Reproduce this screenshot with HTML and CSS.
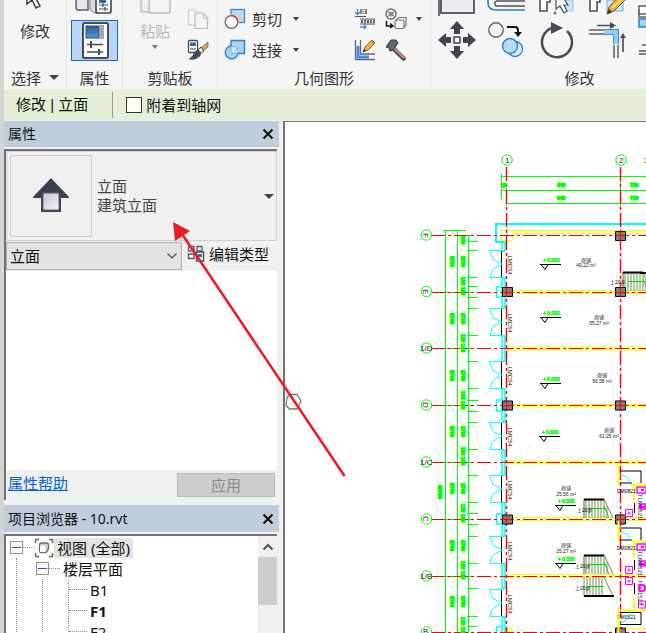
FILE: index.html
```html
<!DOCTYPE html>
<html lang="zh-CN">
<head>
<meta charset="utf-8">
<title>项目浏览器 - 10.rvt</title>
<link rel="stylesheet" href="styles.css">
</head>
<body>
<div class="app">
<header class="ribbon">
  <section class="panel panel-select">
    <div class="panel-body">
      <button class="tool tool-large">
        <svg width="32" height="20" viewBox="0 0 32 20"><path d="M8 -4V4L13 0L17 8L21 6L17 -1H23Z" fill="#fff" stroke="#3b3f45" stroke-width="1.5"/></svg>
        <span>修改</span>
      </button>
    </div>
    <h2 class="panel-title">选择 <i class="caret caret-large"></i></h2>
  </section>
  <section class="panel panel-props">
    <div class="panel-body">
      <button class="tool" aria-label="类型属性">
        <svg width="40" height="16" viewBox="0 0 40 16"><path d="M1 -4V8Q2 11 5 10H13V-4" fill="#e3e7ee" stroke="#5b626b" stroke-width="1.5"/><path d="M15 -2V9Q18 14 24 13V-2" fill="#d8dde4" stroke="#747b84"/><rect x="21" y="-4" width="15" height="17" rx="2" fill="#fff" stroke="#454c55" stroke-width="1.7"/><path d="M24 0H31V3H24Z" fill="#2f6ba6"/><path d="M24 5H33M24 9H33M28 3V7M30 7V11" stroke="#454c55" stroke-width="1.2"/></svg>
      </button>
      <button class="tool tool-active" aria-label="属性">
        <svg width="30" height="38" viewBox="0 0 30 38"><defs><linearGradient id="blue" x2="0" y2="1"><stop stop-color="#2b5c90"/><stop offset="1" stop-color="#5796cb"/></linearGradient></defs><rect x="3" y="1" width="25" height="35" rx="1.5" fill="#fbfbfc" stroke="#454b53" stroke-width="2"/><rect x="6" y="4" width="13" height="12" fill="url(#blue)" stroke="#244d79"/><path d="M20 3H24V17H20Z" fill="#a5a9b3"/><path d="M7 22.500H23M7 30H23" stroke="#454b53" stroke-width="1.500"/><path d="M11 19V26M19 27V33" stroke="#454b53" stroke-width="2"/></svg>
      </button>
    </div>
    <h2 class="panel-title">属性</h2>
  </section>
  <section class="panel panel-clip">
    <div class="panel-body clip-body">
      <button class="tool tool-large" disabled>
        <svg width="34" height="20" viewBox="0 0 34 20"><path d="M3 -3V10Q3 12 5 12H12" fill="#eee" stroke="#c2c2c2" stroke-width="1.600"/><rect x="11" y="-3" width="21" height="16" rx="2" fill="#f3f3f3" stroke="#bdbdbd" stroke-width="1.500"/></svg>
        <span>粘贴</span><i class="caret"></i>
      </button>
      <div class="icon-stack">
        <button class="tool" aria-label="复制"><svg width="22" height="22" viewBox="0 0 22 22"><path d="M1.500 2H9L13 6V17H1.500Z" fill="#f7f7f7" stroke="#c2c2c2"/><path d="M8 5H16L20.500 10V20.500H8Z" fill="#f4f4f4" stroke="#bbb" stroke-width="1.200"/><path d="M16 5V10H20" fill="none" stroke="#c4c4c4"/></svg></button>
        <button class="tool" aria-label="匹配类型"><svg width="22" height="22" viewBox="0 0 22 22"><rect x="1.500" y="1.500" width="9" height="12" rx="1" fill="#fff" stroke="#424952" stroke-width="1.300"/><path d="M3 3.500H9V7H3Z" fill="#2e6ba8"/><path d="M3 10H9" stroke="#424952"/><path d="M21 3L14 9L16 12L21 8Z" fill="#d9a957" stroke="#6b5b46" stroke-width=".7"/><path d="M14 8L11 11L14 14L17 12Z" fill="#dfe3e8" stroke="#454c55"/><path d="M11 11Q7 12 6 16Q4 19 1 20Q8 22 12 18Q14 17 14 14Z" fill="#444b55"/></svg></button>
      </div>
    </div>
    <h2 class="panel-title">剪贴板</h2>
  </section>
  <section class="panel panel-geo">
    <div class="panel-body geo-body">
      <div class="icon-stack geo-main">
        <button class="tool tool-row"><svg width="22" height="22" viewBox="0 0 22 22"><rect x="7" y="1.500" width="13.500" height="13" fill="#b7d9ee" stroke="#4584bd" stroke-width="1.300"/><circle cx="7.500" cy="14" r="7.500" fill="#f5f5f5"/><circle cx="7.500" cy="14" r="6.300" fill="#fff" stroke="#666" stroke-width="1.300"/><path d="M6.500 7.700A6.300 6.300 0 0 1 13.800 14" fill="none" stroke="#f03236" stroke-width="1.500"/></svg><span>剪切</span><i class="caret"></i></button>
        <button class="tool tool-row"><svg width="22" height="22" viewBox="0 0 22 22"><path d="M7 7V1.500H20.500V14.500H14A6.400 6.400 0 1 1 7 7Z" fill="#a9d2ed" stroke="#307fc4" stroke-width="1.400"/><path d="M7 7.500H10Q14 9 14 14H7Z" fill="#d4eaf6" stroke="#6daedd" stroke-width=".8"/></svg><span>连接</span><i class="caret"></i></button>
      </div>
      <div class="icon-grid">
        <button class="tool" aria-label="墙连接"><svg width="22" height="22" viewBox="0 0 22 22"><path d="M3.500 1V6M1 4L3.500 6.500L6 4M6 19H12M10 17L12 19L10 21" fill="none" stroke="#3a8de0" stroke-width="1.300"/><path d="M7 1V6M12 1V6" stroke="#555" stroke-width="1.400"/><path d="M9.500 1V6" stroke="#777" stroke-width="2" stroke-dasharray="1 1"/><path d="M1 8.500H12M6 11H21M6 16H21" stroke="#555" stroke-width="1.200"/><path d="M7 13.500H21" stroke="#62666c" stroke-width="3" stroke-dasharray="2 1"/></svg></button>
        <button class="tool" aria-label="拆除"><svg width="22" height="22" viewBox="0 0 22 22"><circle cx="6" cy="6" r="5" fill="#f1f1f3" stroke="#6b6e73" stroke-width="1.400"/><circle cx="6" cy="6" r="2" fill="none" stroke="#777"/><path d="M2 3L10 9M2 9L10 3" stroke="#777"/><path d="M1.500 13V18H7M5 15.500L8 18L5 20" fill="none" stroke="#111" stroke-width="1.500"/><path d="M11 12L14 9.500H21V17L19 20" fill="#f5f6f8" stroke="#777" stroke-width="1.200"/><rect x="10" y="12" width="9" height="8.500" rx="1.500" fill="#f5f6f8" stroke="#777" stroke-width="1.200"/></svg></button>
        <i class="caret"></i>
        <button class="tool" aria-label="编辑轮廓"><svg width="22" height="22" viewBox="0 0 22 22"><path d="M1.500 1V20.500H21M6.500 1V15H21" fill="none" stroke="#606870" stroke-width="1.300"/><path d="M4 7V18H15" fill="none" stroke="#3c8fdc" stroke-width="3"/><path d="M9 13L11 8L18 1L21 4L14 11Z" fill="#f4b73b" stroke="#765627" stroke-width=".9"/><path d="M9 13L10 10L12 12Z" fill="#333"/><path d="M17 2L20 5" stroke="#e58a42" stroke-width="1.500"/></svg></button>
        <button class="tool" aria-label="拆除工具"><svg width="22" height="22" viewBox="0 0 22 22"><path d="M8 9L18.500 19.500" stroke="#63473e" stroke-width="4.500" stroke-linecap="round"/><path d="M9 9L18.500 18.500" stroke="#bd928b" stroke-width="2" stroke-linecap="round"/><path d="M1 8L6 1H11L13 4L8 11L5 12L4 9Z" fill="#5b6570" stroke="#333a44"/></svg></button>
      </div>
    </div>
    <h2 class="panel-title">几何图形</h2>
  </section>
  <section class="panel panel-modify">
    <div class="panel-body modify-grid">
      <button class="tool" aria-label="对齐"><svg width="40" height="16" viewBox="0 0 40 16"><path d="M2 0V16" stroke="#4a4f57" stroke-width="1.600"/><rect x="4" y="-6" width="33" height="19" fill="#e9edf2" stroke="#4b5158" stroke-width="1.800"/></svg></button>
      <button class="tool" aria-label="偏移"><svg width="40" height="16" viewBox="0 0 40 16"><path d="M38 1H10Q6 2 9 6H38" fill="none" stroke="#4b5158" stroke-width="1.500"/><path d="M1 -1V3Q1 10 9 10H38" fill="none" stroke="#317fc7" stroke-width="1.700"/></svg></button>
      <button class="tool" aria-label="镜像拾取轴"><svg width="40" height="16" viewBox="0 0 40 16"><path d="M3 11V-3H13V2H10V11Z" fill="#fff" stroke="#4b5158" stroke-width="1.600"/><path d="M25 0H36V11H25Z" fill="#cde6f5" stroke="#8ec5e9"/><path d="M19 -2V9L23 6L27 13L30 11L27 5H31L25 -4" fill="#fff" stroke="#4b5158" stroke-width="1.200"/><circle cx="18" cy="13" r="1.500" fill="#389c43"/></svg></button>
      <button class="tool" aria-label="镜像绘制轴"><svg width="40" height="16" viewBox="0 0 40 16"><path d="M3 11V-3H13V2H10V11Z" fill="#fff" stroke="#4b5158" stroke-width="1.600"/><path d="M20 0H36V11H20Z" fill="#cde6f5" stroke="#64aee8"/><path d="M20 14L22 7L33 -5L38 0L27 11Z" fill="#f1b130" stroke="#6b5532"/><path d="M20 14L22 9L25 12Z" fill="#323232"/><path d="M25 8L36 -2" stroke="#fbe093" stroke-width="1.500"/></svg></button>
      <i></i>
      <button class="tool" aria-label="移动"><svg width="40" height="40" viewBox="0 0 40 40"><path d="M20 1L27 9H23V14H17V9H13ZM20 39L27 31H23V26H17V31H13ZM1 20L9 13V17H14V23H9V27ZM39 20L31 13V17H26V23H31V27Z" fill="#40464f"/><path d="M17 17H23V23H17Z" fill="#fff" stroke="#40464f" stroke-width="1.500"/></svg></button>
      <button class="tool" aria-label="复制"><svg width="40" height="40" viewBox="0 0 40 40"><circle cx="9" cy="10" r="7.200" fill="#f2f4f7" stroke="#62666b" stroke-width="1.400"/><path d="M20 7H28Q31 7 31 11V13" fill="none" stroke="#111" stroke-width="2"/><path d="M27 12H35L31 17Z" fill="#111"/><circle cx="28" cy="29" r="7.500" fill="#e0eff8" stroke="#2d7fca" stroke-width="1.300"/><circle cx="23" cy="26" r="7.500" fill="#b9dced" stroke="#2d7fca" stroke-width="1.400"/></svg></button>
      <button class="tool" aria-label="旋转"><svg width="40" height="40" viewBox="0 0 40 40"><path d="M30 11A15 15 0 1 1 15 8" fill="none" stroke="#454c55" stroke-width="2.500"/><path d="M14 2L26 8L14 14Z" fill="#454c55"/></svg></button>
      <button class="tool" aria-label="修剪延伸为角"><svg width="40" height="40" viewBox="0 0 40 40"><path d="M10 5.500H25M36 32V15" stroke="#454c55" stroke-width="1.600"/><path d="M23 2L29 5.500L23 9ZM33 18L36 13L39 18Z" fill="#454c55"/><path d="M2 10H17M2 14H17M27 25V38M31 25V38" stroke="#5a5f66" stroke-width="1.500"/><path d="M17 12H29V24" fill="none" stroke="#94ccf2" stroke-width="5"/><path d="M17 9.500H31.500V24M17 14.500H26.500V24" fill="none" stroke="#3b8bd3"/></svg></button>
      <button class="tool" aria-label="阵列"><svg width="40" height="46" viewBox="0 0 40 46"><rect x="2" y="-6" width="9" height="7" fill="#fff" stroke="#5a5f66" stroke-width="1.500" transform="translate(0 -1)"/><rect x="2" y="-6" width="9" height="8" fill="#fff" stroke="#5a5f66" stroke-width="1.500" transform="translate(0 -5)"/><rect x="2" y="2" width="9" height="8" fill="#a8d3ec" stroke="#2f7fc7" stroke-width="1.500"/><path d="M2 34H20M2 37H20M5 28H20" stroke="#555b63" stroke-width="1.500"/></svg></button>
    </div>
    <h2 class="panel-title">修改</h2>
  </section>
</header>

<div class="options">
  <span class="options-title">修改 | 立面</span>
  <label class="check"><input type="checkbox">附着到轴网</label>
</div>

<div class="workspace">
  <aside class="dock">
    <header class="dock-title"><h2>属性</h2><button class="close" aria-label="关闭"><svg width="12" height="12" viewBox="0 0 12 12"><path d="M1.500 1.500L10.500 10.500M10.500 1.500L1.500 10.500" stroke="#111" stroke-width="2"/></svg></button></header>
    <section class="frame props">
      <button class="type-selector">
        <span class="thumb"><svg width="40" height="40" viewBox="0 0 40 40"><defs><linearGradient id="face" x2="1" y2="1"><stop stop-color="#c4c7d1"/><stop offset="1" stop-color="#f1f2f5"/></linearGradient></defs><path d="M20 2L38 21V22H30V36H10V22H2V21Z" fill="#3b424d"/><path d="M12 17H28V34H12Z" fill="url(#face)" stroke="#596069"/></svg></span>
        <span class="type-name">立面<br>建筑立面</span>
        <i class="caret caret-large"></i>
      </button>
      <div class="filter-row">
        <span class="select-wrap">
          <select aria-label="属性过滤器"><option>立面</option></select>
          <svg class="chevron" width="12" height="8" viewBox="0 0 12 8"><path d="M1.500 1.500L6 6L10.500 1.500" fill="none" stroke="#444" stroke-width="1.200"/></svg>
        </span>
        <button class="edit-type"><svg width="18" height="18" viewBox="0 0 18 18"><path d="M1.500 6V1.500H7V6ZM10 6V1.500H15V6ZM1.500 13.500V9H7V13.500Z" fill="none" stroke="#555c64" stroke-width="1.300"/><rect x="9.500" y="7" width="7" height="9" fill="#fff" stroke="#414952" stroke-width="1.400"/><path d="M11 9H15V12H11Z" fill="#2d6eb2"/></svg>编辑类型</button>
      </div>
      <div class="prop-list"></div>
      <div class="help-row"><a href="#help">属性帮助</a><button class="apply" disabled>应用</button></div>
    </section>
    <header class="dock-title browser-title"><h2>项目浏览器 - 10.rvt</h2><button class="close" aria-label="关闭"><svg width="12" height="12" viewBox="0 0 12 12"><path d="M1.500 1.500L10.500 10.500M10.500 1.500L1.500 10.500" stroke="#111" stroke-width="2"/></svg></button></header>
    <section class="frame browser">
      <ul class="tree">
        <li>
          <div class="node"><button class="toggle" aria-label="折叠"></button><i class="dots"></i><svg width="20" height="20" viewBox="0 0 20 20"><path d="M5 1.500H1.500V5M15 1.500H18.500V5M5 18.500H1.500V15M15 18.500H18.500V15" fill="none" stroke="#666" stroke-width="1.400"/><path d="M5.500 7Q5.500 5 8 5H13Q14.500 5 14.500 7V11L12 14.500H7Q5.500 14.500 5.500 13Z" fill="#c9ccd3" stroke="#666d76" stroke-width="1.300"/><rect x="6" y="7.500" width="5.500" height="6.500" rx="1" fill="#fff"/></svg><span class="label selected">视图 (全部)</span></div>
          <ul class="level">
            <li>
              <div class="node"><button class="toggle" aria-label="折叠"></button><i class="dots"></i><span class="label">楼层平面</span></div>
              <ul class="level leaves">
                <li class="node"><i class="dots dots-long"></i><span class="label">B1</span></li>
                <li class="node"><i class="dots dots-long"></i><strong class="label">F1</strong></li>
                <li class="node"><i class="dots dots-long"></i><span class="label">F2</span></li>
              </ul>
            </li>
          </ul>
        </li>
      </ul>
      <div class="scroll"><button aria-label="向上滚动"><svg width="12" height="8" viewBox="0 0 12 8"><path d="M1.500 6.500L6 2L10.500 6.500" fill="none" stroke="#505050" stroke-width="2"/></svg></button><div class="scroll-thumb"></div></div>
    </section>
  </aside>

  <main class="canvas">
    <svg class="plan" width="361" height="511" viewBox="285 122 361 511">
      <defs>
        <g id="door"><path d="M501.500 0V27" stroke="#000"/><path d="M504 0H489.500L493 9L499 12L503 14L497 16L492 20L490 27H504" fill="none" stroke="#0ff"/><text class="tag" transform="translate(508 5) rotate(90)">LMC54</text></g>
        <g id="col"><path d="M-5 -4.500H5V4.500H-5Z" fill="#808080" stroke="#000"/></g>
        <g id="bub"><circle r="5.200" fill="#fff" stroke="#0f0"/></g>
        <g id="lev"><path d="M0 0H21M1 0L5 5L8 0" fill="none" stroke="#000"/><path d="M3 -4H6M4.500 -6V-3" stroke="#0f0"/><text class="green" x="7" y="-3">0.000</text></g>
        <g id="stair"><path d="M2 0V19M5 0V19M8 0V19M11 0V19M14 0V19M17 0V19M20 0V19M20 0L29 19M20 7L25 19M23 7V19" fill="none" stroke="#6b944a"/><path d="M0 0V19" stroke="#526c3b"/><path d="M0 .5H20" stroke="#000" stroke-width="2"/><path d="M5 9.500H22" stroke="#0d0"/></g>
        <g id="dims"><text class="dim" transform="translate(450 135) rotate(90)">5700</text><text class="dim" transform="translate(461 135) rotate(90)">2700</text><text class="dim" transform="translate(461 156) rotate(90)">150</text><text class="dim" transform="translate(461 166) rotate(90)">150</text></g>
        <g id="bath"><path d="M619 0H641V12M619 12H632" fill="none" stroke="#000"/><path d="M619 4Q629 4 630 12" fill="none" stroke="#0ff"/><path d="M618.500 -7V13M632 13.500H646M634 14V29" fill="none" stroke="#ff0" stroke-width="2"/><path d="M637 16H646V22H637ZM640 33H645V38H640Z" fill="#fff" stroke="#f0f" stroke-width="1.500"/><path d="M641 19H644M639 36H645" stroke="#f0f" stroke-width="2"/><path d="M634.500 32V42" stroke="#000"/><text class="tag" transform="translate(638 23) rotate(90)">TLM1521</text></g>
        <g id="basin"><path d="M0 0H7V7H0Z" fill="#fff" stroke="#f0f"/><path d="M2 3.500H5M3.500 2V5" stroke="#f0f"/></g>
      </defs>
      <path d="M506 347H646M506 350H646M512 290.500H646M512 293.500H646M512 404.500H646M512 407H646M506 461H646M506 463.500H646M512 517.500H646M512 520.500H646M506 574.500H646M506 577H646M625 628.500H646M501.500 241V230.500H646M512.500 241V233.500H646M501 240.500H513M501 628.500H512V633" fill="none" stroke="#ff0" stroke-width="1.200"/>
      <path d="M646 224H496V242H504" fill="none" stroke="#0ff" stroke-width="2"/>
      <path d="M502 242V251H505V242ZM502 278V308H505V278ZM502 336V361H505V336ZM502 389V422H505V389ZM502 450V475H505V450ZM502 503V536H505V503ZM502 564V588H505V564ZM502 617V633H505V617ZM496.500 287H502V297H496.500ZM496.500 400H502V411H496.500ZM496.500 514H502V524H496.500ZM502 627H496.500V633" fill="none" stroke="#0ff" stroke-width="1.500"/>
      <g fill="none" stroke="#0f0">
        <path d="M501 176.500H646M501 190.500H646M506 203.500H646M501.500 174V199M506.500 188V206M620.500 174V206M443 230.500H466M445.500 230V633M457.500 230V633M468.500 235V633"/>
        <path d="M467 241.500H478M467 250.500H478M467 277.500H478M467 286.500H478M467 297.500H478M467 308.500H478M467 335.500H478M467 361.500H478M467 388.500H478M467 400.500H478M467 411.500H478M467 422.500H478M467 449.500H478M467 475.500H478M467 502.500H478M467 513.500H478M467 524.500H478M467 536.500H478M467 563.500H478M467 588.500H478M467 616.500H478M467 626.500H478"/>
        <path d="M455 235.500H471M443 292.500H471M443 348.500H471M443 405.500H471M443 462.500H471M443 519.500H471M443 576.500H471"/>
      </g>
      <use href="#stair" x="623" y="272"/><use href="#stair" x="584" y="499"/><use href="#stair" x="584" y="555"/><path d="M640 273H646" stroke="#000" stroke-width="2"/>
      <path d="M584 577V596M587 577V596M590 577V596M593 577V596M596 577V596M599 577V596M602 577V596M604 577L613 596" stroke="#6b944a"/><path d="M584 596H614" stroke="#000" stroke-width="2"/><path d="M588 586.500H604" stroke="#0d0"/>
      <g class="black"><text x="610" y="284">上20步</text><text x="577" y="512">上20步</text><text x="575" y="568">上20步</text><text x="575" y="590">上20步</text></g>
      <g fill="none" stroke="#f00" stroke-dasharray="14 3 3 3"><path d="M431 235.500H646M431 292.500H646M431 348.500H646M431 405.500H646M431 462.500H646M431 519.500H646M431 576.500H646M431 632.500H646"/><path d="M506.500 167V633M620.500 167V633" stroke-width="1.400"/></g>
      <use href="#door" y="250.500"/><use href="#door" y="308.500"/><use href="#door" y="361.500"/><use href="#door" y="422.500"/><use href="#door" y="475.500"/><use href="#door" y="536.500"/><use href="#door" y="589.500"/>
      <use href="#dims" y="121"/><use href="#dims" y="178"/><use href="#dims" y="235"/><use href="#dims" y="291"/><use href="#dims" y="348"/><use href="#dims" y="405"/><use href="#dims" y="461"/>
      <text class="dim" transform="translate(438 485) rotate(90)">39700</text>
      <text class="dim" transform="translate(461 236) rotate(90)">600</text>
      <text class="dim" x="557" y="187">640</text><text class="dim" x="557" y="200">640</text><text class="dim" x="630" y="187">720</text><text class="dim" x="630" y="200">720</text><text class="dim" x="501" y="187">10</text>
      <use href="#col" x="620.500" y="236"/><use href="#col" x="507.500" y="292"/><use href="#col" x="620.500" y="292"/><use href="#col" x="507.500" y="405.500"/><use href="#col" x="620.500" y="405.500"/><use href="#col" x="507.500" y="519.500"/><use href="#col" x="620.500" y="519.500"/><use href="#col" x="620.500" y="632.500"/>
      <path d="M506.500 287V297M506.500 400V410M506.500 514V524M620.500 231V240M620.500 287V297M620.500 400V410M620.500 514V524M502 292.500H513M502 405.500H513M502 519.500H513M615 292.500H626M615 405.500H626M615 519.500H626M615 235.500H626" stroke="#f00"/>
      <use href="#bub" x="507" y="160"/><use href="#bub" x="621" y="160"/><use href="#bub" x="426.500" y="235"/><use href="#bub" x="426.500" y="291.500"/><use href="#bub" x="426.500" y="348"/><use href="#bub" x="426.500" y="405"/><use href="#bub" x="426.500" y="462"/><use href="#bub" x="426.500" y="519"/><use href="#bub" x="426.500" y="576"/><use href="#bub" x="426.500" y="632"/>
      <g class="axis"><text x="505" y="163">1</text><text x="619" y="163">2</text><text x="644" y="163">3</text><text transform="translate(423 233) rotate(90)">F</text><text transform="translate(423 289) rotate(90)">E</text><text x="420" y="351">1/D</text><text transform="translate(423 402) rotate(90)">D</text><text x="420" y="465">1/C</text><text transform="translate(423 516) rotate(90)">C</text><text x="420" y="579">1/B</text><text x="423" y="634">B</text></g>
      <use href="#lev" x="540" y="264.500"/><use href="#lev" x="540" y="317.500"/><use href="#lev" x="540" y="383.500"/><use href="#lev" x="539" y="436.500"/><use href="#lev" x="555" y="505.500"/><use href="#lev" x="555" y="563.500"/>
      <g class="room"><text x="586" y="262">商铺</text><text x="586" y="267">49.22 m²</text><text x="599" y="319">商铺</text><text x="599" y="325">55.27 m²</text><text x="602" y="377">商铺</text><text x="602" y="383">56.58 m²</text><text x="609" y="432">商铺</text><text x="609" y="438">61.25 m²</text><text x="566" y="490">商铺</text><text x="566" y="496">25.56 m²</text><text x="566" y="547">商铺</text><text x="566" y="553">25.27 m²</text></g>
      <use href="#bath" y="471"/><use href="#bath" y="528"/>
      <g class="black"><text x="617" y="493">DM0821</text><text x="617" y="550">DM0821</text><text x="617" y="619">DM0821</text></g>
      <use href="#basin" x="625.500" y="509.500"/><use href="#basin" x="625.500" y="566.500"/><use href="#basin" x="625.500" y="577.500"/><use href="#basin" x="638.500" y="601"/>
      <path d="M618.500 610V633M618.500 610.500H646M634 597V610" fill="none" stroke="#ff0" stroke-width="2"/><path d="M620 612.500H641V624.500H620M634.500 583V594" fill="none" stroke="#000"/><path d="M620 623Q629 621 630 612" fill="none" stroke="#0ff"/><text class="tag" transform="translate(638 580) rotate(90)">TLM1521</text><circle cx="642" cy="588" r="3" fill="none" stroke="#f0f" stroke-width="2"/>
      <path d="M287 397L290 394.500H297L301 401L297 409H290L286 406Z" fill="#fff" stroke="#777" stroke-width="1.300"/>
    </svg>
  </main>
</div>
<svg class="pointer" width="182" height="262" viewBox="168 218 182 262"><path d="M344.500 476L182 234" stroke="#ed1c24" stroke-width="2.600"/><path d="M173 222L190 231L175 241Z" fill="#ed1c24"/></svg>
</div>
</body>
</html>
```

FILE: styles.css
```css
* { box-sizing: border-box; }

body {
  margin: 0;
  font: 15px/20px "Noto Sans", "Noto Sans CJK SC", sans-serif;
  color: #111;
}

button, select, input { font: inherit; color: inherit; margin: 0; padding: 0; }
button { border: 0; background: none; }
svg { display: block; flex: none; }
h2 { margin: 0; font-size: 15px; font-weight: 400; }
ul { margin: 0; padding: 0; list-style: none; }

.app {
  position: relative;
  display: flex;
  flex-direction: column;
  height: 100vh;
  overflow: hidden;
  border-left: 4px solid #d4d4d4;
  background: #f0f0f0;
}

.caret {
  flex: none;
  width: 0;
  height: 0;
  border: 3px solid transparent;
  border-top: 4px solid #444;
  border-bottom: 0;
}
.caret-large { border-width: 5px 5px 0; }

/* Ribbon */
.ribbon { display: flex; flex: none; height: 89px; overflow: hidden; background: #f5f5f5; color: #333; }
.panel { display: flex; flex: none; flex-direction: column; border-right: 1px solid #e2efd3; }
.panel-body { height: 67px; }
.panel-title { display: flex; align-items: center; justify-content: center; gap: 8px; height: 21px; }
.panel-select { width: 63px; }
.panel-props { width: 56px; }
.panel-clip { width: 95px; }
.panel-geo { width: 213px; }
.panel-modify { width: 298px; }

.tool { display: flex; align-items: center; justify-content: center; }
.tool-large { flex-direction: column; width: 100%; }
.tool-large span { line-height: 22px; }
.tool-large .caret { margin-top: 3px; border-top-color: #777; }
.tool:disabled { color: #b5b5b5; }
.panel-props .panel-body { display: flex; flex-direction: column; align-items: center; gap: 4px; }
.tool-active { width: 47px; height: 41px; border: 1px solid #1469c7; background: #b9d7f2; }

.clip-body { display: grid; grid-template-columns: 64px 22px; align-items: start; }
.icon-stack { display: grid; gap: 9px; padding-top: 8px; }
.geo-body { display: flex; justify-content: space-between; padding: 0 8px 0 6px; }
.geo-main { align-content: start; }
.tool-row { gap: 6px; height: 22px; }
.tool-row .caret { margin-left: 5px; }
.icon-grid { display: grid; grid-template-columns: 22px 22px 6px; gap: 9px; align-content: start; align-items: center; padding-top: 8px; }
.modify-grid { display: grid; grid-template-columns: repeat(5, 50px); grid-template-rows: 16px 40px; gap: 4px 0; align-items: center; justify-items: center; padding-left: 1px; }
.modify-grid svg { overflow: visible; }

/* Options bar */
.options { display: flex; flex: none; align-items: center; height: 31px; padding-left: 12px; background: #e5efd7; }
.options-title { padding-right: 24px; border-right: 1px solid #999; font-family: "Liberation Sans", "Noto Sans CJK SC", sans-serif; line-height: 26px; }
.check { display: flex; align-items: center; gap: 4px; padding-left: 13px; }
.check input { appearance: none; width: 16px; height: 16px; border: 1px solid #333; background: #fff; }

/* Docked palettes */
.workspace { display: flex; flex: 1; min-height: 0; padding-top: 1px; }
.dock { display: flex; flex: none; flex-direction: column; width: 275px; margin-right: 4px; }
.dock-title { display: flex; flex: none; align-items: center; justify-content: space-between; height: 26px; padding: 0 5px 0 4px; background: #bfccda; }
.dock-title h2 { font-size: 14px; }
.frame { margin: 2px 2px 0 0; border: solid #737373; border-width: 2px 0 0 2px; }

.props { display: flex; flex: none; flex-direction: column; height: 351px; }
.type-selector { display: flex; flex: none; align-items: center; width: 100%; height: 90px; padding: 0 2px 0 3px; border: 1px solid #d0d0d0; text-align: left; color: #444; }
.thumb { display: grid; place-items: center; width: 82px; height: 82px; border: 1px solid #ccc; }
.type-name { flex: 1; padding-left: 5px; line-height: 19px; }
.filter-row { display: flex; flex: none; height: 30px; padding-top: 1px; }
.select-wrap { position: relative; width: 176px; height: 28px; }
.select-wrap select { appearance: none; width: 100%; height: 100%; padding-left: 3px; border: 1px solid #adadad; border-radius: 0; background: #e2e2e2; }
.chevron { position: absolute; top: 10px; right: 4px; }
.edit-type { display: flex; align-items: center; gap: 4px; height: 24px; padding-left: 5px; }
.prop-list { flex: 1; background: #fff; }
.help-row { display: flex; flex: none; align-items: center; justify-content: space-between; height: 30px; padding: 0 2px; }
.help-row a { line-height: 26px; align-self: flex-start; color: #0066cc; }
.apply { width: 98px; height: 24px; border: 1px solid #b9b9b9; background: #ccc; color: #888; }

.browser-title { margin-top: 5px; height: 27px; }
.browser { display: flex; flex: 1; min-height: 0; overflow: hidden; background: #fff; }
.tree { flex: 1; padding: 1px 0 0 4px; }
.node { display: flex; align-items: center; height: 21px; }
.toggle { display: grid; flex: none; place-items: center; width: 13px; height: 13px; border: 1px solid #929292; background: #f8f8f8; }
.toggle::before { width: 9px; height: 1px; background: #2f55a0; content: ""; }
.dots { width: 11px; border-top: 1px dotted #888; }
.dots-long { width: 18px; }
.level { margin-left: 6px; padding-left: 19px; border-left: 1px dotted #888; }
.leaves { padding-left: 25px; }
.leaves li { border-left: 1px dotted #888; }
.label { padding: 0 3px; }
.selected { background: #e3e3e3; }
.scroll { width: 19px; background: #f0f0f0; }
.scroll button { display: grid; place-items: center; width: 100%; height: 21px; }
.scroll-thumb { height: 48px; background: #cdcdcd; }

/* Drawing area */
.canvas { flex: 1; min-width: 0; overflow: hidden; border: solid #737373; border-width: 1px 0 0 2px; background: #fff; }
.plan { font: 5px/1 "Liberation Sans", "Noto Sans CJK SC", sans-serif; }
.tag { font-size: 6px; fill: #222; }
.dim { font-size: 5px; font-weight: 700; fill: #0f0; stroke: #0f0; stroke-width: 1px; }
.green { fill: #0f0; stroke: #0f0; stroke-width: .5px; }
.black { fill: #000; }
.axis { font-size: 8px; fill: #222; }
.room { fill: #222; text-anchor: middle; }

.pointer { position: absolute; top: 218px; left: 164px; pointer-events: none; }
```
